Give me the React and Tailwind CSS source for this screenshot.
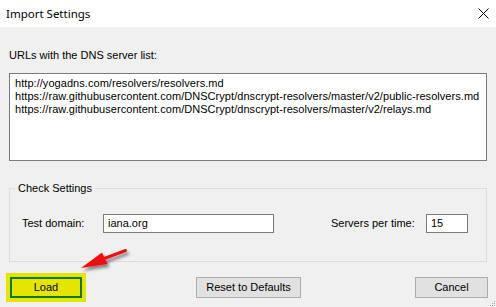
import React from 'react'

const urls = [
  'http://yogadns.com/resolvers/resolvers.md',
  'https://raw.githubusercontent.com/DNSCrypt/dnscrypt-resolvers/master/v2/public-resolvers.md',
  'https://raw.githubusercontent.com/DNSCrypt/dnscrypt-resolvers/master/v2/relays.md',
]

const ui = { fontFamily: 'Tahoma, "Liberation Sans", Arial, sans-serif' }

function WinButton({ children, className = '' }) {
  return (
    <div className={`h-[21px] flex items-center justify-center border border-[#adadad] bg-[#e1e1e1] text-[11px] text-black ${className}`}>
      {children}
    </div>
  )
}

export default function App() {
  return (
    <div className="relative w-[496px] h-[307px] overflow-hidden bg-[#f0f0f0] text-black" style={ui}>
      {/* Title bar */}
      <div className="h-[27px] bg-white flex items-center justify-between pl-[6px] pr-[7px]">
        <span className="text-[11.5px] leading-[16px]" style={{ fontFamily: '"Noto Sans", "Liberation Sans", sans-serif' }}>Import Settings</span>
        <svg width="11" height="11" viewBox="0 0 11 11" className="mb-[1px]">
          <path d="M0.5 0.5 L10.5 10.5 M10.5 0.5 L0.5 10.5" stroke="#000" strokeWidth="1" fill="none" />
        </svg>
      </div>

      <div className="px-[9px] flex flex-col">
        <div className="mt-[22px] text-[11px] leading-[13px]">URLs with the DNS server list:</div>

        <div className="mt-[11px] h-[88px] bg-white border border-[#7a7a7a] pl-[5px] pt-[3px] text-[11px] leading-[13px] tracking-[0.05px] whitespace-nowrap">
          {urls.map(u => <div key={u}>{u}</div>)}
        </div>

        {/* Check Settings group */}
        <div className="mt-[27px] h-[74px] border border-[#dcdcdc] flex flex-col">
          <span className="-mt-[7px] ml-[5px] px-[3px] w-fit bg-[#f0f0f0] text-[11px] leading-[13px]">Check Settings</span>
          <div className="mt-[19px] h-[19px] flex items-center pl-[12px] text-[11px]">
            <span className="w-[81px]">Test domain:</span>
            <div className="w-[171px] h-[19px] bg-white border border-[#7a7a7a] pl-[4px] flex items-center">iana.org</div>
            <span className="ml-[57px] w-[95px]">Servers per time:</span>
            <div className="w-[42px] h-[19px] bg-white border border-[#7a7a7a] pl-[4px] flex items-center">15</div>
          </div>
        </div>

        {/* Buttons */}
        <div className="mt-[15px] flex items-center">
          <div className="ml-[1px] w-[72px] h-[21px] flex items-center justify-center border-2 border-[#0b7a0b] bg-[#e5e500] text-[11px] shadow-[0_0_0_4px_#e5e500]">
            Load
          </div>
          <WinButton className="ml-[114px] w-[105px]">Reset to Defaults</WinButton>
          <WinButton className="ml-auto -mr-[1px] w-[73px]">Cancel</WinButton>
        </div>
      </div>

      {/* Annotation arrow */}
      <svg className="absolute left-0 top-0 pointer-events-none" width="496" height="307">
        <defs>
          <filter id="sh" x="-50%" y="-50%" width="200%" height="200%">
            <feDropShadow dx="2" dy="3" stdDeviation="1.5" floodColor="#000" floodOpacity="0.45" />
          </filter>
        </defs>
        <g filter="url(#sh)">
          <path d="M125.5 250.5 L103 259" stroke="#f01010" strokeWidth="3" strokeLinecap="round" />
          <polygon points="81,268 102,252.5 107.5,264" fill="#f01010" />
        </g>
      </svg>

      {/* Resize grip */}
      <svg className="absolute right-0 bottom-0" width="8" height="8" viewBox="0 0 8 8">
        <rect x="6" y="2" width="1" height="1" fill="#a0a0a0" />
        <rect x="4" y="4" width="1" height="1" fill="#a0a0a0" />
        <rect x="6" y="4" width="1" height="1" fill="#a0a0a0" />
        <rect x="2" y="6" width="1" height="1" fill="#a0a0a0" />
        <rect x="4" y="6" width="1" height="1" fill="#a0a0a0" />
        <rect x="6" y="6" width="1" height="1" fill="#a0a0a0" />
      </svg>
    </div>
  )
}
